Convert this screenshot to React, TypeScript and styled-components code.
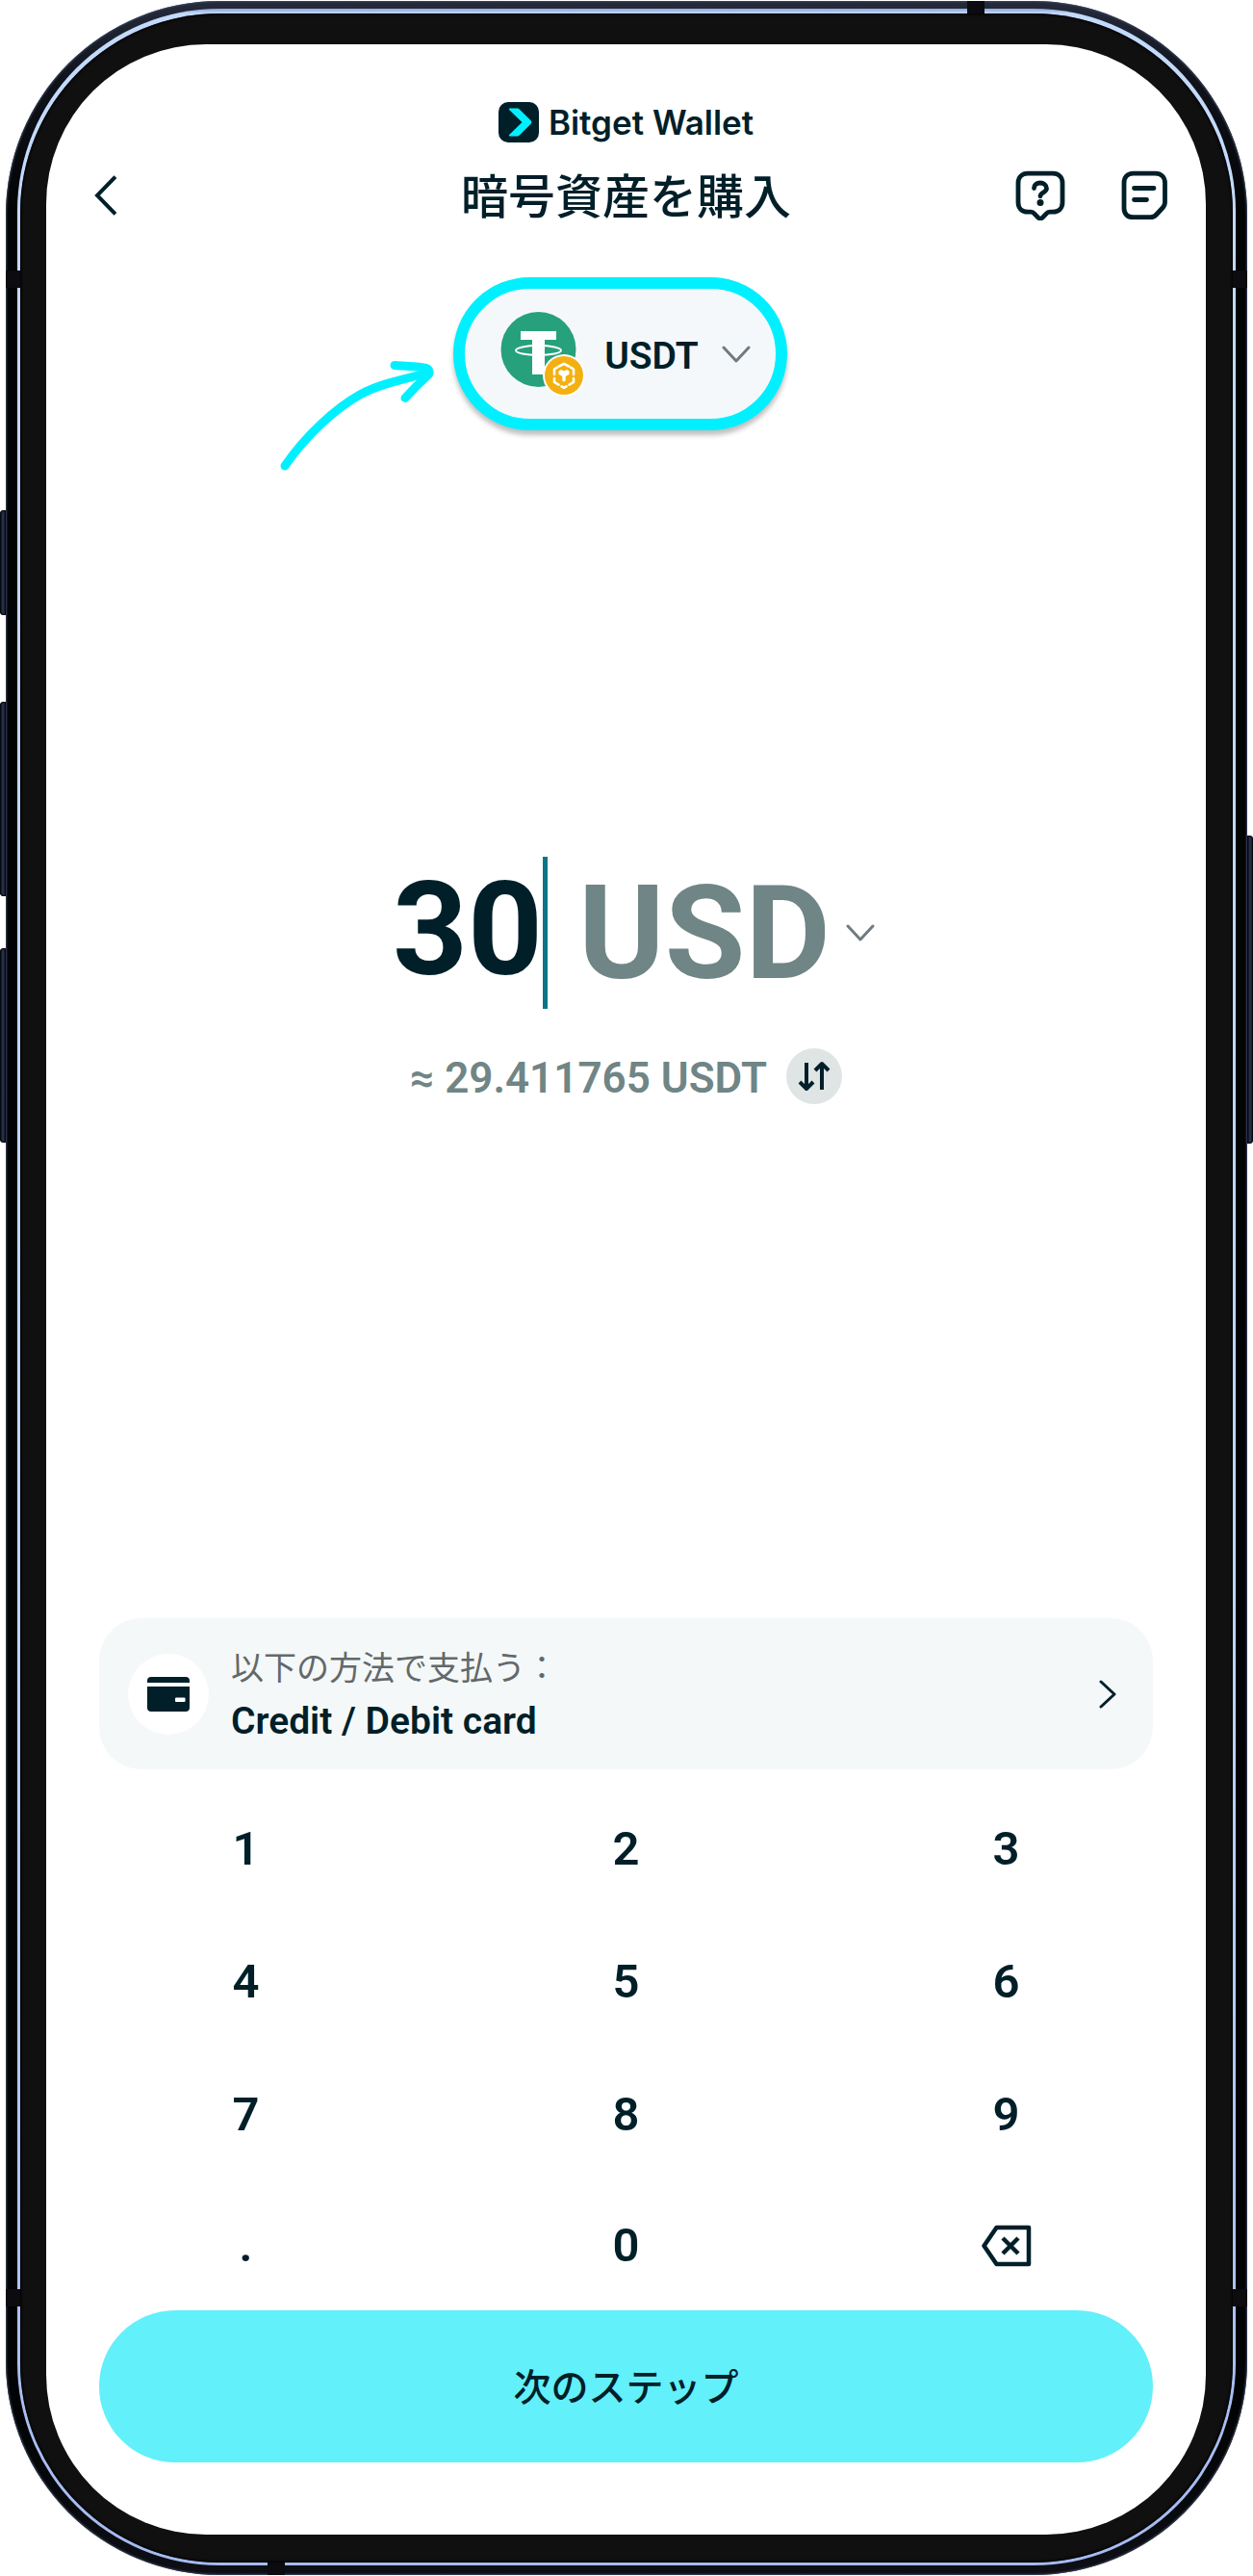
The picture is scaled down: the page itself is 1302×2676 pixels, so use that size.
import React, { useState } from "react";
import styled, { createGlobalStyle } from "styled-components";

const ink = "#001f29";
const muted = "#708585";
const latin = `Roboto, "Noto Sans CJK JP", sans-serif`;

const GlobalStyle = createGlobalStyle`
  *, *::before, *::after { box-sizing: border-box; }
  html, body { margin: 0; background: #fff; }
  body { font-family: ${latin}; color: ${ink}; }
  button, input, select {
    font: inherit;
    color: inherit;
    margin: 0;
    padding: 0;
    border: 0;
    background: none;
    outline: none;
    appearance: none;
  }
  button, select { cursor: pointer; }
  svg { display: block; flex: none; }
`;

const Page = styled.div`
  min-height: 100vh;
  display: flex;
  padding: 1px 6px;
`;

const Phone = styled.div`
  position: relative;
  flex: 1;
  display: flex;
  padding: 8px 12px 10px;
  border-radius: 222px;
  background: linear-gradient(180deg, #252b3c 0, #10131b 80px, #020304 220px, #020304 calc(100% - 160px), #0d0f15 100%);
  box-shadow: inset 0 0 2px 1px #3b465e;
`;

const Rim = styled.div`
  flex: 1;
  display: flex;
  padding: 5px 3px 3px;
  border-radius: 210px;
  background: linear-gradient(180deg, #8fa6d8 0, #c3dafb 5px, #bcd7fa 60%, #a5baf0 100%);
`;

const Bezel = styled.div`
  flex: 1;
  display: flex;
  padding: 32px 28px 29px 27px;
  border-radius: 207px;
  background: #101010;
  box-shadow: inset 0 0 3px 1px #000;
`;

const Antenna = styled.span<{ $side: "top" | "bottom" | "left" | "right"; $at: string }>`
  position: absolute;
  background: #0b0b10;
  ${({ $side, $at }) =>
    $side === "top" || $side === "bottom"
      ? `${$side}: 0; left: ${$at}; width: 18px; height: 13px;`
      : `${$side}: 0; top: ${$at}; width: 15px; height: 18px;`}
`;

const SideKey = styled.span<{ $side: "left" | "right"; $top: number; $length: number }>`
  position: absolute;
  ${({ $side }) => $side}: -6px;
  top: ${({ $top }) => $top}px;
  width: 6px;
  height: ${({ $length }) => $length}px;
  border-radius: ${({ $side }) => ($side === "left" ? "4px 0 0 4px" : "0 4px 4px 0")};
  background: linear-gradient(90deg, #05070b, #2b3656 50%, #0b0e18);
  box-shadow: inset 0 0 1px 1px #05070b;
`;

const Screen = styled.main`
  flex: 1;
  min-width: 0;
  display: flex;
  flex-direction: column;
  padding: 60px 55px 75px;
  border-radius: 166px;
  background: #fff;
`;

const Brand = styled.div`
  display: flex;
  align-items: center;
  justify-content: center;
  gap: 10px;
  height: 42px;
  font: 600 35px/42px Inter, sans-serif;
`;

const Header = styled.header`
  display: grid;
  grid-template-columns: 1fr auto 1fr;
  align-items: center;
  height: 70px;
  margin: 20px -5px 0;
`;

const Title = styled.h1`
  margin: 0;
  padding-bottom: 4px;
  font: 500 49px/66px "Noto Sans CJK JP", sans-serif;
`;

const IconButton = styled.button`
  display: flex;
  justify-self: start;
`;

const Actions = styled.div`
  display: flex;
  justify-content: flex-end;
  gap: 58px;
  margin-right: -10px;
`;

const TokenRow = styled.div`
  display: flex;
  justify-content: center;
  margin-top: 50px;
  padding-right: 12px;
`;

const TokenAnchor = styled.div`
  position: relative;
`;

const PointerArrow = styled.svg`
  position: absolute;
  right: calc(100% + 20px);
  top: 84px;
`;

const TokenButton = styled.button`
  display: flex;
  align-items: center;
  height: 159px;
  padding: 0 26px 0 37px;
  border: 12px solid #00f0ff;
  border-radius: 80px;
  background: #f5f8fa;
  box-shadow: 0 5px 5px rgba(0, 0, 0, 0.25);
  font-weight: 600;
  font-size: 39px;
`;

const TokenName = styled.span`
  margin: 0 24px 0 20px;
  padding-top: 5px;
`;

const Quote = styled.section`
  flex: 1;
  display: flex;
  flex-direction: column;
  align-items: center;
  justify-content: center;
  padding-bottom: 91px;
`;

const AmountRow = styled.div`
  display: flex;
  align-items: center;
  height: 158px;
  padding-left: 16px;
  font-weight: 700;
  font-size: 136px;
`;

const AmountInput = styled.input`
  height: 158px;
  padding-bottom: 8px;
  font-weight: 700;
  caret-color: transparent;
`;

const Caret = styled.span`
  width: 5px;
  height: 158px;
  background: #0c7488;
`;

const CurrencySelect = styled.select`
  height: 158px;
  margin: 0 16px 0 32px;
  padding-bottom: 12px;
  color: ${muted};
  font-weight: 700;
`;

const EstimateRow = styled.div`
  display: flex;
  align-items: center;
  gap: 20px;
  margin-top: 41px;
  color: ${muted};
  font-weight: 600;
  font-size: 44px;
`;

const Estimate = styled.span`
  padding-top: 4px;
`;

const SwapButton = styled.button`
  display: flex;
  align-items: center;
  justify-content: center;
  width: 58px;
  height: 58px;
  border-radius: 50%;
  background: #dfe4e4;
`;

const MethodCard = styled.button`
  display: flex;
  align-items: center;
  height: 157px;
  padding: 0 38px 0 30px;
  border-radius: 44px;
  background: #f4f8f9;
  text-align: left;
`;

const MethodIcon = styled.span`
  display: flex;
  align-items: center;
  justify-content: center;
  width: 84px;
  height: 84px;
  border-radius: 50%;
  background: #fff;
`;

const MethodText = styled.span`
  flex: 1;
  display: flex;
  flex-direction: column;
  margin-left: 23px;
`;

const MethodHint = styled.span`
  padding-bottom: 6px;
  color: #63686a;
  font: 400 34px/50px "Noto Sans CJK JP", sans-serif;
`;

const MethodName = styled.span`
  font-weight: 600;
  font-size: 39px;
  line-height: 52px;
`;

const Keypad = styled.div`
  display: grid;
  grid-template-columns: repeat(3, 1fr);
  grid-template-rows: repeat(3, 138px) 135px;
  margin: 13px -45px 0;
`;

const Key = styled.button`
  display: flex;
  align-items: center;
  justify-content: center;
  font-weight: 600;
  font-size: 49px;
`;

const NextButton = styled.button`
  height: 158px;
  padding-bottom: 4px;
  border-radius: 80px;
  background: #62f0fa;
  font: 500 39px/58px "Noto Sans CJK JP", sans-serif;
`;

const ChevronDown = () => (
  <svg width="30" height="18" viewBox="0 0 30 18" fill="none" stroke="#6f7b80" strokeWidth="3" strokeLinecap="round" strokeLinejoin="round">
    <path d="M2 2l13 14L28 2" />
  </svg>
);

const BrandMark = () => (
  <svg width="42" height="42" viewBox="0 0 42 42" aria-hidden="true">
    <rect width="42" height="42" rx="10" fill={ink} />
    <path
      d="M11.800 6.500h7.800c.9 0 1.500.3 2.100.9L33.600 19.300c1 1 1 2.400 0 3.400L21.700 34.600c-.6.6-1.200.9-2.100.9h-7.800c-.9 0-1.300-.9-.7-1.500L24.500 21 11.100 8c-.6-.6-.2-1.500.7-1.500z"
      fill="#00f0ff"
    />
  </svg>
);

const TokenLogo = () => (
  <svg width="88" height="88" viewBox="0 0 88 88" aria-hidden="true">
    <circle cx="39.500" cy="39" r="39" fill="#26a17b" />
    <path d="M21 20h37v9H46v36H33V29H21z" fill="#fff" />
    <ellipse cx="39.500" cy="40" rx="23.500" ry="5" fill="none" stroke="#fff" strokeWidth="2" />
    <path d="M33 42h13v4.500H33z" fill="#fff" />
    <circle cx="66" cy="66" r="22" fill="#fff" />
    <circle cx="66" cy="66" r="20" fill="#f3b010" />
    <g fill="none" stroke="#fff" strokeWidth="2.600" strokeLinejoin="round" strokeLinecap="round">
      <path d="M61 56.500l5-2.700 5 2.700" />
      <path d="M56 65v-5.500l3-1.800M76 65v-5.500l-3-1.800" />
      <path d="M56 69v4l4.500 2.700M76 69v4l-4.500 2.700" />
      <path d="M63.500 77.300l2.500 1.500 2.500-1.500" />
    </g>
    <path d="M60.500 61.500l2.700-1.500 2.800 1.600 2.800-1.600 2.700 1.500v3.200l-3.800 2.300v4.500L66 72.500l-1.700-1V67l-3.800-2.300z" fill="#fff" />
  </svg>
);

const keys = ["1", "2", "3", "4", "5", "6", "7", "8", "9", ".", "0"];

export default function App() {
  const [amount, setAmount] = useState("30");

  const press = (key: string) => {
    if (key === "." && amount.includes(".")) return;
    if (amount.length < 7) setAmount(amount === "0" && key !== "." ? key : amount + key);
  };
  const erase = () => setAmount(amount.length > 1 ? amount.slice(0, -1) : "0");
  const estimate = (Number(amount) / 1.02).toFixed(6);

  return (
    <>
      <GlobalStyle />
      <Page>
        <Phone>
          <SideKey $side="left" $top={529} $length={109} />
          <SideKey $side="left" $top={728} $length={202} />
          <SideKey $side="left" $top={984} $length={202} />
          <SideKey $side="right" $top={867} $length={320} />
          <Rim>
            <Bezel>
              <Screen>
                <Brand>
                  <BrandMark />
                  <span>Bitget Wallet</span>
                </Brand>

                <Header>
                  <IconButton aria-label="戻る">
                    <svg width="24" height="42" viewBox="0 0 24 42" fill="none" stroke={ink} strokeWidth="4" strokeLinecap="square">
                      <path d="M20.500 3L3 21l17.500 18" />
                    </svg>
                  </IconButton>
                  <Title>暗号資産を購入</Title>
                  <Actions>
                    <IconButton aria-label="ヘルプ">
                      <svg width="52" height="52" viewBox="0 0 52 52" fill="none" stroke={ink} strokeWidth="4.800" strokeLinecap="round" strokeLinejoin="round">
                        <path d="M13 3.200h26c6 0 10 4 10 10v20c0 6-4 10-10 10h-3c-2 0-3 .8-4.200 2.200l-3.300 3.500c-1.500 1.500-3.500 1.500-5 0l-3.300-3.500C19 44 18 43.200 16 43.200h-3c-6 0-10-4-10-10v-20c0-6 4-10 10-10z" />
                        <path d="M19.500 18.500c0-3.500 3-5.500 6.300-5.500 3.500 0 6.700 2.200 6.700 5.800 0 4.200-6.500 4.200-6.500 8" />
                        <circle cx="26" cy="33.500" r="3.500" fill={ink} stroke="none" />
                      </svg>
                    </IconButton>
                    <IconButton aria-label="注文履歴">
                      <svg width="48" height="52" viewBox="0 0 48 52" fill="none" stroke={ink} strokeWidth="4.800" strokeLinecap="round" strokeLinejoin="round">
                        <path d="M12.500 3.200h23c6 0 10 4 10 10V33c0 2.500-.8 4.300-2.500 6l-6.500 7c-1.800 2-3.500 2.700-6 2.700h-18c-6 0-9.500-3.500-9.500-9.500v-26c0-6 3.500-10 9.500-10z" />
                        <path d="M13.500 18.500H34M13.500 30.500h13" />
                      </svg>
                    </IconButton>
                  </Actions>
                </Header>

                <TokenRow>
                  <TokenAnchor>
                    <PointerArrow width="164" height="120" viewBox="0 0 164 120" fill="none" stroke="#00f0ff" strokeWidth="9" strokeLinecap="round" strokeLinejoin="round" aria-hidden="true">
                      <path d="M9 112C31 80 62 52 87 38c20-11 42-15 68-22" />
                      <path d="M123 7.500c12 1 26 1 33 3 3 1 4 5 2 7-10 9-15 14-24 24" />
                    </PointerArrow>
                    <TokenButton aria-haspopup="dialog">
                      <TokenLogo />
                      <TokenName>USDT</TokenName>
                      <ChevronDown />
                    </TokenButton>
                  </TokenAnchor>
                </TokenRow>

                <Quote>
                  <AmountRow>
                    <AmountInput
                      aria-label="金額"
                      inputMode="none"
                      value={amount}
                      readOnly
                      style={{ width: `${amount.length}ch` }}
                    />
                    <Caret />
                    <CurrencySelect id="currency" aria-label="通貨" defaultValue="USD">
                      <option value="USD">USD</option>
                    </CurrencySelect>
                    <ChevronDown />
                  </AmountRow>
                  <EstimateRow>
                    <Estimate>≈ {estimate} USDT</Estimate>
                    <SwapButton aria-label="通貨を入れ替える">
                      <svg width="34" height="34" viewBox="0 0 34 34" fill="none" stroke={ink} strokeWidth="4" strokeLinejoin="round">
                        <path d="M9 3v26M2 23l7 7 7-7M25 31V5M18 11l7-7 7 7" />
                      </svg>
                    </SwapButton>
                  </EstimateRow>
                </Quote>

                <MethodCard>
                  <MethodIcon>
                    <svg width="44" height="36" viewBox="0 0 44 36" aria-hidden="true">
                      <path d="M4 0h36c2.500 0 4 1.500 4 4v2H0V4c0-2.500 1.500-4 4-4z" fill={ink} />
                      <path d="M0 10h44v22c0 2.500-1.500 4-4 4H4c-2.500 0-4-1.500-4-4z" fill={ink} />
                      <rect x="29" y="21.500" width="10.500" height="4.500" rx="1" fill="#fff" />
                    </svg>
                  </MethodIcon>
                  <MethodText>
                    <MethodHint>以下の方法で支払う：</MethodHint>
                    <MethodName>Credit / Debit card</MethodName>
                  </MethodText>
                  <svg width="18" height="30" viewBox="0 0 18 30" fill="none" stroke={ink} strokeWidth="3" strokeLinecap="round" strokeLinejoin="round">
                    <path d="M2 2l14 13L2 28" />
                  </svg>
                </MethodCard>

                <Keypad>
                  {keys.map((key) => (
                    <Key key={key} onClick={() => press(key)}>
                      {key}
                    </Key>
                  ))}
                  <Key aria-label="削除" onClick={erase}>
                    <svg width="52" height="44" viewBox="0 0 52 44" fill="none" stroke={ink} strokeWidth="4.500" strokeLinejoin="round">
                      <path d="M15.500 3H49v38H15.500L2.500 22z" />
                      <path d="M22 14l16 16M38 14L22 30" />
                    </svg>
                  </Key>
                </Keypad>

                <NextButton>次のステップ</NextButton>
              </Screen>
            </Bezel>
          </Rim>
          <Antenna $side="top" $at="999px" />
          <Antenna $side="bottom" $at="272px" />
          <Antenna $side="left" $at="280px" />
          <Antenna $side="right" $at="280px" />
          <Antenna $side="left" $at="2377px" />
          <Antenna $side="right" $at="2377px" />
        </Phone>
      </Page>
    </>
  );
}
